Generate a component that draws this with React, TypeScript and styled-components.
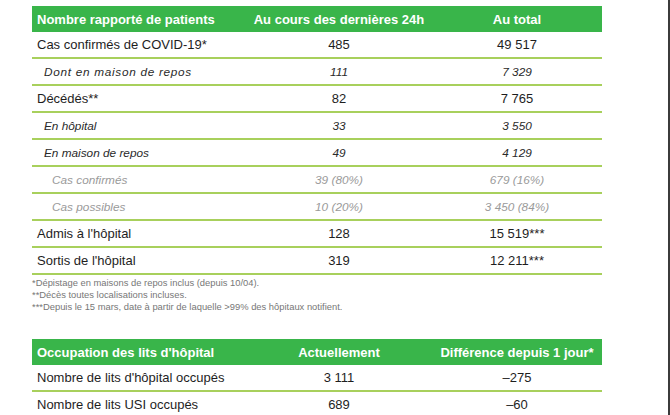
import React from "react";
import styled, { createGlobalStyle } from "styled-components";

const Global = createGlobalStyle`
  html, body { margin: 0; padding: 0; background: #fff; }
  body { font-family: "Liberation Sans", Arial, sans-serif; }
`;

const Page = styled.div`
  width: 670px;
  height: 415px;
  overflow: hidden;
  display: flex;
  background: #fff;
`;

const Content = styled.div`
  flex: 1;
  padding: 6px 0 0 32px;
`;

const Edge = styled.div`
  width: 2px;
  background: #3b3b3b;
`;

const Table = styled.div`
  width: 570px;
  display: grid;
  grid-template-columns: 214px 186px 170px;
`;

const HeadCell = styled.div<{ $align?: "left" | "center" }>`
  background: #39b54a;
  color: #fff;
  font-weight: bold;
  font-size: 13px;
  height: 26px;
  display: flex;
  align-items: center;
  justify-content: ${(p) => (p.$align === "left" ? "flex-start" : "center")};
  padding-left: ${(p) => (p.$align === "left" ? "5px" : "0")};
  white-space: nowrap;
`;

type Kind = "main" | "sub" | "minor";

const Cell = styled.div<{ $kind: Kind; $label?: boolean; $last?: boolean; $spread?: number }>`
  height: 25px;
  border-bottom: 2px solid ${(p) => (p.$last ? "transparent" : "#a8d05c")};
  display: flex;
  align-items: center;
  justify-content: ${(p) => (p.$label ? "flex-start" : "center")};
  padding-left: ${(p) =>
    !p.$label ? "0" : p.$kind === "main" ? "5px" : p.$kind === "sub" ? "12px" : "20px"};
  font-size: ${(p) => (p.$kind === "main" ? "13px" : "11.8px")};
  letter-spacing: ${(p) => (p.$spread ? `${p.$spread}px` : "normal")};
  font-style: ${(p) => (p.$kind === "main" ? "normal" : "italic")};
  color: ${(p) => (p.$kind === "minor" ? "#9a9a9a" : p.$kind === "sub" ? "#2a2a2a" : "#1e1e1e")};
  white-space: nowrap;
`;

const Notes = styled.div`
  padding-top: 2px;
  font-size: 9.4px;
  line-height: 12px;
  color: #777;
  height: 62px;
`;

type Row = { label: string; a: string; b: string; kind: Kind; spread?: number };

const rows: Row[] = [
  { label: "Cas confirmés de COVID-19*", a: "485", b: "49 517", kind: "main" },
  { label: "Dont en maison de repos", a: "111", b: "7 329", kind: "sub", spread: 0.7 },
  { label: "Décédés**", a: "82", b: "7 765", kind: "main" },
  { label: "En hôpital", a: "33", b: "3 550", kind: "sub" },
  { label: "En maison de repos", a: "49", b: "4 129", kind: "sub" },
  { label: "Cas confirmés", a: "39 (80%)", b: "679 (16%)", kind: "minor" },
  { label: "Cas possibles", a: "10 (20%)", b: "3 450 (84%)", kind: "minor" },
  { label: "Admis à l'hôpital", a: "128", b: "15 519***", kind: "main" },
  { label: "Sortis de l'hôpital", a: "319", b: "12 211***", kind: "main" },
];

const beds: Row[] = [
  { label: "Nombre de lits d'hôpital occupés", a: "3 111", b: "–275", kind: "main" },
  { label: "Nombre de lits USI occupés", a: "689", b: "–60", kind: "main" },
];

function DataTable({
  head,
  data,
  lastBorder,
}: {
  head: [string, string, string];
  data: Row[];
  lastBorder: boolean;
}) {
  return (
    <Table>
      <HeadCell $align="left">{head[0]}</HeadCell>
      <HeadCell>{head[1]}</HeadCell>
      <HeadCell>{head[2]}</HeadCell>
      {data.map((r, i) => {
        const last = !lastBorder && i === data.length - 1;
        return (
          <React.Fragment key={r.label}>
            <Cell $kind={r.kind} $label $last={last} $spread={r.spread}>{r.label}</Cell>
            <Cell $kind={r.kind} $last={last}>{r.a}</Cell>
            <Cell $kind={r.kind} $last={last}>{r.b}</Cell>
          </React.Fragment>
        );
      })}
    </Table>
  );
}

export default function App() {
  return (
    <>
      <Global />
      <Page>
        <Content>
          <DataTable
            head={["Nombre rapporté de patients", "Au cours des dernières 24h", "Au total"]}
            data={rows}
            lastBorder
          />
          <Notes>
            <div>*Dépistage en maisons de repos inclus (depuis 10/04).</div>
            <div>**Décès toutes localisations incluses.</div>
            <div>***Depuis le 15 mars, date à partir de laquelle &gt;99% des hôpitaux notifient.</div>
          </Notes>
          <DataTable
            head={["Occupation des lits d'hôpital", "Actuellement", "Différence depuis 1 jour*"]}
            data={beds}
            lastBorder={false}
          />
        </Content>
        <Edge />
      </Page>
    </>
  );
}
